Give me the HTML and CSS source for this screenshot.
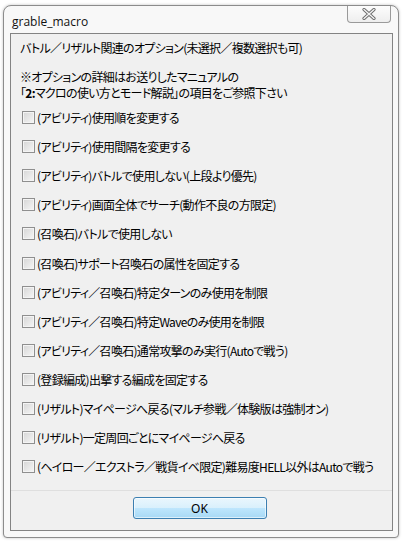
FILE: index.html
```html
<!DOCTYPE html>
<html lang="ja">
<head>
<meta charset="utf-8">
<link rel="stylesheet" href="styles.css">
</head>
<body>
<div class="window">
  <div class="titlebar">
    <span class="title">grable_macro</span>
    <div class="close">
      <svg width="14" height="12" viewBox="0 0 14 12">
        <path d="M2 1.5 L12 10.5 M12 1.5 L2 10.5" stroke="#6a6a6a" stroke-width="3.2" stroke-linecap="round" fill="none"/>
        <path d="M2 1.5 L12 10.5 M12 1.5 L2 10.5" stroke="#f4f4f4" stroke-width="1.4" stroke-linecap="round" fill="none"/>
      </svg>
    </div>
  </div>
  <div class="client">
    <div class="content">
      <p class="lead">バトル／リザルト関連のオプション(未選択／複数選択も可)</p>
      <p class="note">※オプションの詳細はお送りしたマニュアルの<br>「<b>2:</b>マクロの使い方とモード解説」の項目をご参照下さい</p>
      <ul class="options">
        <li><span class="cb"></span>(アビリティ)使用順を変更する</li>
        <li><span class="cb"></span>(アビリティ)使用間隔を変更する</li>
        <li><span class="cb"></span>(アビリティ)バトルで使用しない(上段より優先)</li>
        <li><span class="cb"></span>(アビリティ)画面全体でサーチ(動作不良の方限定)</li>
        <li><span class="cb"></span>(召喚石)バトルで使用しない</li>
        <li><span class="cb"></span>(召喚石)サポート召喚石の属性を固定する</li>
        <li><span class="cb"></span>(アビリティ／召喚石)特定ターンのみ使用を制限</li>
        <li><span class="cb"></span>(アビリティ／召喚石)特定Waveのみ使用を制限</li>
        <li><span class="cb"></span>(アビリティ／召喚石)通常攻撃のみ実行(Autoで戦う)</li>
        <li><span class="cb"></span>(登録編成)出撃する編成を固定する</li>
        <li><span class="cb"></span>(リザルト)マイページへ戻る(マルチ参戦／体験版は強制オン)</li>
        <li><span class="cb"></span>(リザルト)一定周回ごとにマイページへ戻る</li>
        <li><span class="cb"></span>(ヘイロー／エクストラ／戦貨イベ限定)難易度HELL以外はAutoで戦う</li>
      </ul>
    </div>
    <div class="footer">
      <button class="ok">OK</button>
    </div>
  </div>
</div>
</body>
</html>
```
FILE: styles.css
```css
html, body {
  margin: 0;
  padding: 0;
  background: #ffffff;
}
body {
  width: 403px;
  height: 542px;
  overflow: hidden;
  font-family: "Noto Sans CJK JP", "Noto Sans", sans-serif;
  font-size: 12px;
  color: #000;
}
.window {
  box-sizing: border-box;
  margin: 5px 0 0 3px;
  width: 396px;
  height: 533px;
  border: 1px solid #8c8c8c;
  border-radius: 8px 8px 4px 4px;
  background: #f8f8f8;
  box-shadow: 0 0 3px rgba(0,0,0,0.25);
  display: flex;
  flex-direction: column;
}
.titlebar {
  height: 27px;
  display: flex;
  align-items: flex-start;
  padding-left: 8px;
  padding-right: 7px;
}
.title {
  font-family: "Open Sans", "Noto Sans", sans-serif;
  font-size: 12px;
  line-height: 14px;
  margin-top: 9px;
  color: #111;
}
.close {
  margin-left: auto;
  width: 44px;
  height: 17px;
  box-sizing: border-box;
  border: 1px solid #9a9a9a;
  border-top: none;
  border-radius: 0 0 4px 4px;
  background: linear-gradient(#fdfdfd, #eeeeee);
  display: flex;
  align-items: center;
  justify-content: center;
}
.client {
  flex: 1;
  margin: 0 5px 6px 6px;
  border: 1px solid #838383;
  background: #f0f0f0;
  display: flex;
  flex-direction: column;
}
.content {
  flex: 1;
  padding: 6px 0 0 9px;
  letter-spacing: -0.7px;
}
p {
  margin: 0;
  line-height: 16px;
  font-feature-settings: "palt";
}
.lead {
  margin-bottom: 13px;
}
.note b {
  font-weight: bold;
}
.options {
  list-style: none;
  margin: 2px 0 0 0;
  padding: 0;
}
.options li {
  height: 29.1px;
  display: flex;
  align-items: center;
  font-feature-settings: "palt";
  white-space: nowrap;
}
.cb {
  box-sizing: border-box;
  width: 13px;
  height: 13px;
  border: 1px solid #8f8f8f;
  background: linear-gradient(135deg, #d6d6d6, #f6f6f6);
  box-shadow: inset 0 0 0 1px #f4f4f4;
  margin: 0 2px 0 2px;
  flex: none;
}
.footer {
  height: 40px;
  border-top: 1px solid #dfdfdf;
  display: flex;
  justify-content: center;
  align-items: flex-start;
  padding-top: 6px;
  box-sizing: border-box;
}
.ok {
  width: 134px;
  height: 22px;
  margin-left: -4px;
  border: 1px solid #3c7fb1;
  border-radius: 3px;
  background: linear-gradient(#eaf6fd 0%, #d9f0fc 50%, #bee6fd 51%, #a7d9f5 100%);
  box-shadow: inset 0 0 0 1px rgba(255,255,255,0.6);
  font-family: "Noto Sans", sans-serif;
  font-size: 12px;
  color: #000;
  padding: 0;
}
```
